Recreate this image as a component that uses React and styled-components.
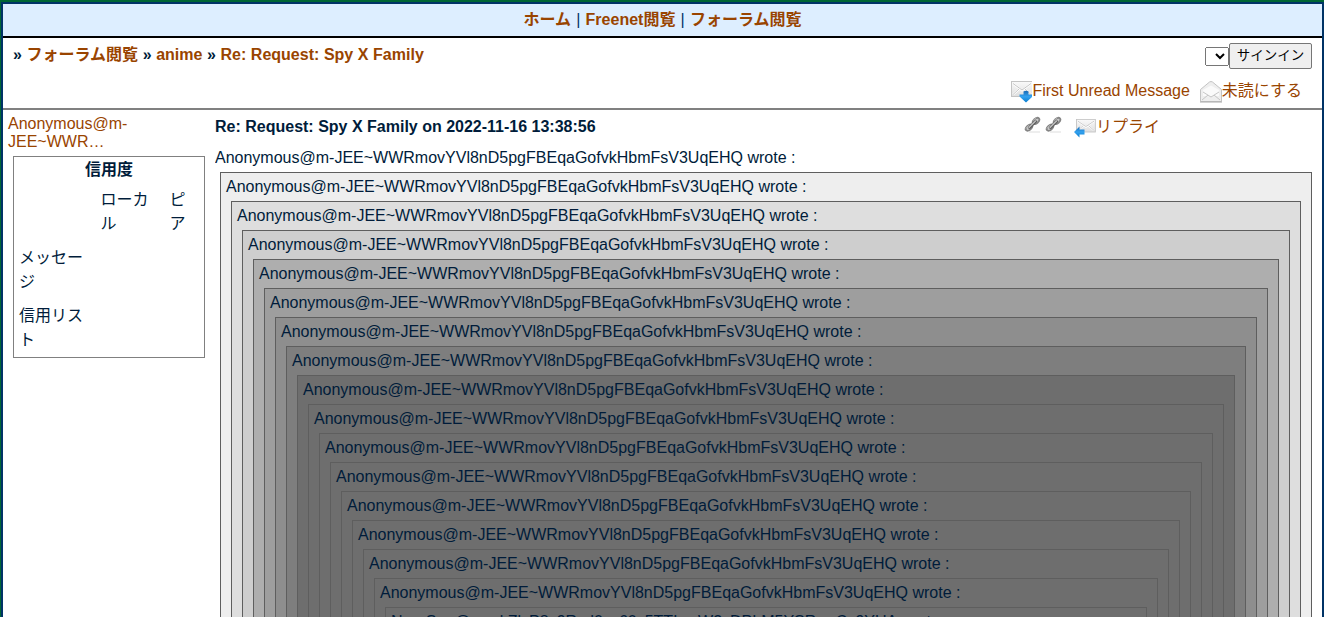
import React from "react";
import styled, { createGlobalStyle } from "styled-components";

const GlobalStyle = createGlobalStyle`
  * { box-sizing: border-box; }
  html, body { margin: 0; height: 617px; overflow: hidden; }
  body {
    font: 16px/18px "Liberation Sans", "Noto Sans CJK JP", sans-serif;
    color: #001c3a;
    background: #fff;
  }
`;

const Frame = styled.div`
  height: 617px;
  overflow: hidden;
  border-top: 2px solid #006633;
  border-left: 1px solid #006633;
`;
const Page = styled.div`
  height: 615px;
  overflow: hidden;
  border: 2px solid #003366;
  border-bottom: 0;
  background: #fff;
`;
const Link = styled.a`
  color: #940;
  text-decoration: none;
`;
const NavBar = styled.nav`
  display: flex;
  justify-content: center;
  gap: 4.5px;
  height: 34px;
  padding-top: 7px;
  border-bottom: 2px solid #000;
  background: #ddeeff;
  font-weight: bold;
  white-space: nowrap;
`;
const NavDivider = styled.span`
  color: #036;
  font-weight: normal;
  width: 5.5px;
  text-align: center;
`;
const Header = styled.header`
  display: flex;
  justify-content: space-between;
  height: 72px;
  padding: 5px 10px 0;
  border-bottom: 2px solid #808080;
`;
const Crumbs = styled.div`
  padding-top: 3px;
  font-weight: bold;
  white-space: pre;
  word-spacing: 0.15px;
`;
const HeaderSide = styled.div`
  display: flex;
  flex-direction: column;
  align-items: flex-end;
`;
const SignIn = styled.form`
  display: flex;
  align-items: center;
  height: 26px;
`;
const Identity = styled.select`
  width: 24px;
  height: 19px;
  font: 13.333px "Liberation Sans", sans-serif;
`;
const Submit = styled.button`
  width: 83px;
  height: 26px;
  padding: 0;
  border: 1px solid #767676;
  border-radius: 2px;
  background: #efefef;
  color: #000;
  font: 13.5px/20px "Liberation Sans", "Noto Sans CJK JP", sans-serif;
`;
const Actions = styled.div`
  display: flex;
  gap: 10px;
  padding: 12px 10px 0 0;
`;
const IconLink = styled(Link)`
  display: flex;
  height: 22px;
  white-space: nowrap;
  svg { flex: none; }
`;
const IconLabel = styled.span`
  padding-top: 1px;
`;
const Thread = styled.main`
  display: flex;
  padding: 5px 10px 0 5px;
`;
const Author = styled.aside`
  width: 207px;
  flex: none;
`;
const Trust = styled.section`
  width: 192px;
  height: 202px;
  margin: 5px 0 0 5px;
  padding-top: 1px;
  border: 1px solid #808080;
  line-height: 24px;
`;
const TrustTitle = styled.div`
  text-align: center;
  font-weight: bold;
`;
const TrustGrid = styled.div`
  display: grid;
  grid-template-columns: 81.5px 69px 24px;
  grid-template-rows: 58px 58px 58px;
  padding: 6px 0 0 5px;
`;
const TrustCell = styled.div`
  width: ${(p) => p.$w}px;
  word-break: break-all;
`;
const Post = styled.article`
  flex: 1;
  min-width: 0;
  height: 502px;
  overflow: hidden;
`;
const PostHead = styled.div`
  display: flex;
  justify-content: space-between;
  height: 34px;
  padding: 3px 152px 0 0;
  font-weight: bold;
`;
const PostTools = styled.div`
  display: flex;
  align-items: flex-start;
  gap: 0;
  margin-top: -1px;
  font-weight: normal;
`;
const Permalinks = styled.div`
  display: flex;
  margin: -1px 8px 0 0;
`;
const Quote = styled.div`
  height: 900px;
  margin-top: 5px;
  margin-left: 5px;
  margin-right: ${(p) => (p.$outer ? 0 : 5)}px;
  padding: 5px;
  border: 1px solid #5e5e5e;
  background: ${(p) => p.$shade};
`;
const Line = styled.div`
  height: 18px;
  white-space: nowrap;
`;

const Flap = () => (
  <>
    <rect x=".5" y=".5" width="21" height="15" fill="url(#paper)" stroke="#c4c4c4" />
    <path d="M2 2.5 11 9.5 20 2.5M2 13.5 8.2 8M20 13.5 13.8 8" fill="none" stroke="#fff" strokeWidth="2" />
    <path d="M2 2.5 11 9 20 2.5M2 13.5 8 8M20 13.5 14 8" fill="none" stroke="#bdbdbd" strokeWidth=".9" />
  </>
);
const Defs = () => (
  <defs>
    <linearGradient id="paper" x2="0" y2="1">
      <stop stopColor="#fafafa" /><stop offset="1" stopColor="#dedede" />
    </linearGradient>
    <linearGradient id="blue" x2="0" y2="1">
      <stop stopColor="#1769b5" /><stop offset=".5" stopColor="#34a2ef" /><stop offset="1" stopColor="#087cce" />
    </linearGradient>
  </defs>
);
const UnreadIcon = () => (
  <svg width="21.5" height="22" viewBox="0 0 21.5 22">
    <Defs /><Flap />
    <path d="M12.5 10.5Q15 9 17.5 10.5V13.5H21.5V15.5L15 21.5 8.5 15.5V13.5H12.5Z" fill="url(#blue)" />
  </svg>
);
const OpenMailIcon = () => (
  <svg width="22" height="22" viewBox="0 0 22 22">
    <path d="M.5 8.5 9.5 1Q11 0 12.5 1L21.5 8.5V20.5H.5Z" fill="#eee" stroke="#c3c3c3" />
    <path d="M3 9 11 4.5 19 9V15H3Z" fill="#fafafa" />
    <path d="M3 11 11 16 19 11M2 19 8 14M20 19 14 14" fill="none" stroke="#c6c6c6" />
    <path d="M0 21h22" stroke="#aaa" />
  </svg>
);
const ReplyIcon = () => (
  <svg width="22" height="22" viewBox="0 0 22 22">
    <g transform="translate(2 2) scale(.9 .84)"><Flap /></g>
    <path d="M0 15 5.5 9.5V12.5H10.5V17.5H5.5V20.5Z" fill="url(#blue)" />
  </svg>
);
const ChainIcon = () => (
  <svg width="21" height="18" viewBox="0 0 21 18">
    <path d="M5 16h11" stroke="#ddd" />
    <g fill="none" strokeLinecap="round">
      <ellipse cx="5" cy="11.6" rx="3.9" ry="2.3" transform="rotate(-42 5 11.6)" fill="#c8c8c8" stroke="#858585" strokeWidth="1.8" />
      <ellipse cx="12" cy="5" rx="3.9" ry="2.3" transform="rotate(-42 12 5)" fill="#c8c8c8" stroke="#858585" strokeWidth="1.8" />
      <path d="M5.5 11.5 11.5 5.5" stroke="#5c5c5c" strokeWidth="3" />
      <path d="M5 11.5 11.5 5" stroke="#c4c4c4" strokeWidth="1.2" />
      <path d="M2 12.2 4.5 9.5M9.5 4.2 12 2" stroke="#bbb" strokeWidth=".8" />
    </g>
  </svg>
);

const WRITER = "Anonymous@m-JEE~WWRmovYVl8nD5pgFBEqaGofvkHbmFsV3UqEHQ wrote :";
const LAST_WRITER = "NeroSau@wuokZlvP8z9Rvd0vz60z5TTLvzW2zDPLM5YSRwzCz9YUA wrote :";
const SHADES = ["#eee", "#dedede", "#cecece", "#aeaeae", "#9e9e9e", "#8e8e8e", "#7e7e7e", "#6e6e6e"];
const DEPTH = 16;

const NestedQuote = ({ level = 0 }) => (
  <Quote $outer={level === 0} $shade={SHADES[Math.min(level, SHADES.length - 1)]}>
    <Line>{level === DEPTH - 1 ? LAST_WRITER : WRITER}</Line>
    {level < DEPTH - 1 && <NestedQuote level={level + 1} />}
  </Quote>
);

export default function App() {
  return (
    <Frame>
      <GlobalStyle />
      <Page>
        <NavBar>
          <Link>ホーム</Link><NavDivider>|</NavDivider><Link>Freenet閲覧</Link><NavDivider>|</NavDivider><Link>フォーラム閲覧</Link>
        </NavBar>
        <Header>
          <Crumbs>
            » <Link>フォーラム閲覧</Link> » <Link>anime</Link> » <Link>Re: Request: Spy X Family</Link>
          </Crumbs>
          <HeaderSide>
            <SignIn>
              <Identity />
              <Submit type="button">サインイン</Submit>
            </SignIn>
            <Actions>
              <IconLink><UnreadIcon /><IconLabel>First Unread Message</IconLabel></IconLink>
              <IconLink><OpenMailIcon /><IconLabel>未読にする</IconLabel></IconLink>
            </Actions>
          </HeaderSide>
        </Header>
        <Thread>
          <Author>
            <Link>Anonymous@m-<br />JEE~WWR…</Link>
            <Trust>
              <TrustTitle>信用度</TrustTitle>
              <TrustGrid>
                <span />
                <TrustCell $w={50}>ローカル</TrustCell>
                <TrustCell $w={18}>ピア</TrustCell>
                <TrustCell $w={66}>メッセージ</TrustCell>
                <span /><span />
                <TrustCell $w={66}>信用リスト</TrustCell>
              </TrustGrid>
            </Trust>
          </Author>
          <Post>
            <PostHead>
              <span>Re: Request: Spy X Family on 2022-11-16 13:38:56</span>
              <PostTools>
                <Permalinks><ChainIcon /><ChainIcon /></Permalinks>
                <IconLink><ReplyIcon /><IconLabel>リプライ</IconLabel></IconLink>
              </PostTools>
            </PostHead>
            <Line>{WRITER}</Line>
            <NestedQuote />
          </Post>
        </Thread>
      </Page>
    </Frame>
  );
}
